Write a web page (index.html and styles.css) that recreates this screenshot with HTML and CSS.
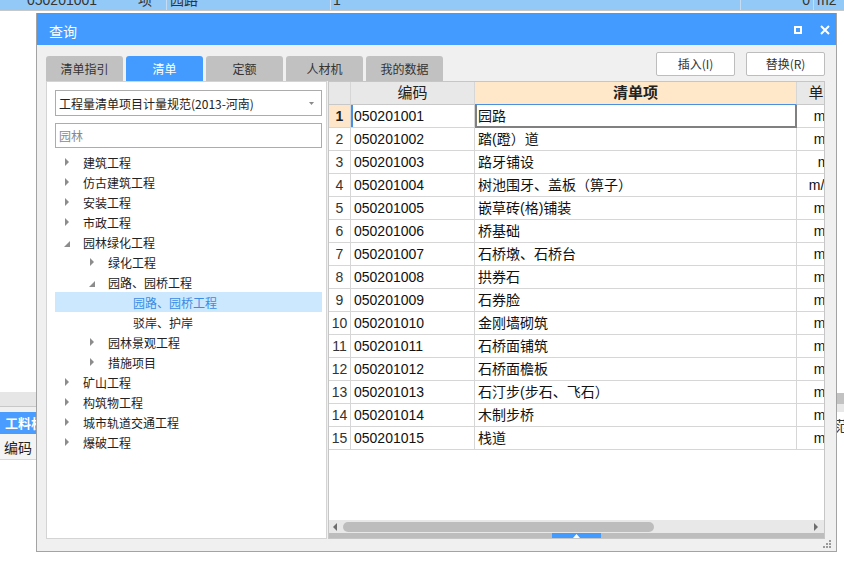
FILE: index.html
```html
<!DOCTYPE html>
<html lang="zh-CN">
<head>
<meta charset="utf-8">
<title>查询</title>
<link rel="stylesheet" href="styles.css">
</head>
<body>
<div class="bg-band">
  <div class="band-row">
    <span class="bc c1">050201001</span>
    <span class="bc c2">项</span>
    <span class="bc c3">园路</span>
    <span class="bc c4">1</span>
    <span class="bc c5">0</span>
    <span class="bc c6">m2</span>
  </div>
</div>
<div class="bg-line"></div>

<div class="bg-left">
  <div class="bl-strip"></div>
  <div class="bl-gap"></div>
  <div class="bl-tab">工料机</div>
  <div class="bl-head">编码</div>
</div>
<div class="bg-right">
  <div class="br-strip"></div>
  <div class="br-gap"></div>
  <div class="br-text">范围</div>
</div>

<div class="dialog">
  <div class="titlebar">
    <span class="title">查询</span>
    <span class="tb-icons">
      <svg class="ic-max" width="8" height="8" viewBox="0 0 8 8"><rect x="1" y="1" width="6" height="6" fill="none" stroke="#fff" stroke-width="2"/></svg>
      <svg class="ic-close" width="10" height="10" viewBox="0 0 10 10"><path d="M1 1 L9 9 M9 1 L1 9" stroke="#fff" stroke-width="2" fill="none"/></svg>
    </span>
  </div>

  <div class="toprow">
    <div class="tabs">
      <div class="tab">清单指引</div>
      <div class="tab active">清单</div>
      <div class="tab">定额</div>
      <div class="tab">人材机</div>
      <div class="tab">我的数据</div>
    </div>
    <div class="btns">
      <div class="btn">插入(I)</div>
      <div class="btn">替换(R)</div>
    </div>
  </div>

  <div class="content">
    <div class="left">
      <div class="select">
        <span>工程量清单项目计量规范(2013-河南)</span>
        <svg width="5" height="3" viewBox="0 0 5 3"><polygon points="0,0 5,0 2.5,3" fill="#8a8a8a"/></svg>
      </div>
      <div class="search">园林</div>
      <div class="tree">
        <div class="node"><span class="arr"><svg width="4" height="8" viewBox="0 0 4 8"><polygon points="0,0 4,4 0,8" fill="#8c8c8c"/></svg></span>建筑工程</div>
        <div class="node"><span class="arr"><svg width="4" height="8" viewBox="0 0 4 8"><polygon points="0,0 4,4 0,8" fill="#8c8c8c"/></svg></span>仿古建筑工程</div>
        <div class="node"><span class="arr"><svg width="4" height="8" viewBox="0 0 4 8"><polygon points="0,0 4,4 0,8" fill="#8c8c8c"/></svg></span>安装工程</div>
        <div class="node"><span class="arr"><svg width="4" height="8" viewBox="0 0 4 8"><polygon points="0,0 4,4 0,8" fill="#8c8c8c"/></svg></span>市政工程</div>
        <div class="node"><span class="arr open"><svg width="6" height="6" viewBox="0 0 6 6"><polygon points="6,0 6,6 0,6" fill="#8c8c8c"/></svg></span>园林绿化工程</div>
        <div class="node l1"><span class="arr"><svg width="4" height="8" viewBox="0 0 4 8"><polygon points="0,0 4,4 0,8" fill="#8c8c8c"/></svg></span>绿化工程</div>
        <div class="node l1"><span class="arr open"><svg width="6" height="6" viewBox="0 0 6 6"><polygon points="6,0 6,6 0,6" fill="#8c8c8c"/></svg></span>园路、园桥工程</div>
        <div class="node l2 sel"><span class="arr"></span>园路、园桥工程</div>
        <div class="node l2"><span class="arr"></span>驳岸、护岸</div>
        <div class="node l1"><span class="arr"><svg width="4" height="8" viewBox="0 0 4 8"><polygon points="0,0 4,4 0,8" fill="#8c8c8c"/></svg></span>园林景观工程</div>
        <div class="node l1"><span class="arr"><svg width="4" height="8" viewBox="0 0 4 8"><polygon points="0,0 4,4 0,8" fill="#8c8c8c"/></svg></span>措施项目</div>
        <div class="node"><span class="arr"><svg width="4" height="8" viewBox="0 0 4 8"><polygon points="0,0 4,4 0,8" fill="#8c8c8c"/></svg></span>矿山工程</div>
        <div class="node"><span class="arr"><svg width="4" height="8" viewBox="0 0 4 8"><polygon points="0,0 4,4 0,8" fill="#8c8c8c"/></svg></span>构筑物工程</div>
        <div class="node"><span class="arr"><svg width="4" height="8" viewBox="0 0 4 8"><polygon points="0,0 4,4 0,8" fill="#8c8c8c"/></svg></span>城市轨道交通工程</div>
        <div class="node"><span class="arr"><svg width="4" height="8" viewBox="0 0 4 8"><polygon points="0,0 4,4 0,8" fill="#8c8c8c"/></svg></span>爆破工程</div>
      </div>
    </div>

    <div class="grid">
      <div class="table">
        <div class="row head">
          <div class="cell num"></div>
          <div class="cell hc">编码</div>
          <div class="cell hc hname">清单项</div>
          <div class="cell hc unit">单位</div>
        </div>
        <div class="row cur"><div class="cell num">1</div><div class="cell code">050201001</div><div class="cell name focus">园路</div><div class="cell unit">m2</div></div>
        <div class="row"><div class="cell num">2</div><div class="cell code">050201002</div><div class="cell name">踏(蹬）道</div><div class="cell unit">m2</div></div>
        <div class="row"><div class="cell num">3</div><div class="cell code">050201003</div><div class="cell name">路牙铺设</div><div class="cell unit">m</div></div>
        <div class="row"><div class="cell num">4</div><div class="cell code">050201004</div><div class="cell name">树池围牙、盖板（箅子）</div><div class="cell unit">m/个</div></div>
        <div class="row"><div class="cell num">5</div><div class="cell code">050201005</div><div class="cell name">嵌草砖(格)铺装</div><div class="cell unit">m2</div></div>
        <div class="row"><div class="cell num">6</div><div class="cell code">050201006</div><div class="cell name">桥基础</div><div class="cell unit">m3</div></div>
        <div class="row"><div class="cell num">7</div><div class="cell code">050201007</div><div class="cell name">石桥墩、石桥台</div><div class="cell unit">m3</div></div>
        <div class="row"><div class="cell num">8</div><div class="cell code">050201008</div><div class="cell name">拱券石</div><div class="cell unit">m3</div></div>
        <div class="row"><div class="cell num">9</div><div class="cell code">050201009</div><div class="cell name">石券脸</div><div class="cell unit">m2</div></div>
        <div class="row"><div class="cell num">10</div><div class="cell code">050201010</div><div class="cell name">金刚墙砌筑</div><div class="cell unit">m3</div></div>
        <div class="row"><div class="cell num">11</div><div class="cell code">050201011</div><div class="cell name">石桥面铺筑</div><div class="cell unit">m2</div></div>
        <div class="row"><div class="cell num">12</div><div class="cell code">050201012</div><div class="cell name">石桥面檐板</div><div class="cell unit">m2</div></div>
        <div class="row"><div class="cell num">13</div><div class="cell code">050201013</div><div class="cell name">石汀步(步石、飞石）</div><div class="cell unit">m3</div></div>
        <div class="row"><div class="cell num">14</div><div class="cell code">050201014</div><div class="cell name">木制步桥</div><div class="cell unit">m2</div></div>
        <div class="row"><div class="cell num">15</div><div class="cell code">050201015</div><div class="cell name">栈道</div><div class="cell unit">m2</div></div>
      </div>
      <div class="hscroll">
        <svg width="4" height="8" viewBox="0 0 4 8"><polygon points="4,0 0,4 4,8" fill="#6e6e6e"/></svg>
        <div class="thumb"></div>
        <div class="spacer"></div>
        <svg width="4" height="8" viewBox="0 0 4 8"><polygon points="0,0 4,4 0,8" fill="#6e6e6e"/></svg>
      </div>
      <div class="splitter">
        <div class="split-tab"><svg width="7" height="4" viewBox="0 0 7 4"><polygon points="3.5,0 7,4 0,4" fill="#fff"/></svg></div>
      </div>
    </div>
  </div>

  <div class="footer">
    <svg width="8" height="8" viewBox="0 0 8 8" fill="#9a9a9a"><rect x="6" y="0" width="2" height="2"/><rect x="3" y="3" width="2" height="2"/><rect x="6" y="3" width="2" height="2"/><rect x="0" y="6" width="2" height="2"/><rect x="3" y="6" width="2" height="2"/><rect x="6" y="6" width="2" height="2"/></svg>
  </div>
</div>
</body>
</html>
```

FILE: styles.css
```css
* { box-sizing: border-box; }
html, body { margin: 0; padding: 0; }
body {
  width: 844px;
  height: 569px;
  position: relative;
  overflow: hidden;
  background: #fff;
  font-family: "Noto Sans CJK SC", sans-serif;
}

/* background application (behind the dialog) */
.bg-band { height: 10px; background: #93c9f7; overflow: hidden; }
.band-row {
  display: flex;
  height: 20px;
  margin-top: -10px;
  line-height: 20px;
  font-size: 14px;
  color: #333;
  font-family: "Liberation Sans", "Noto Sans CJK SC", sans-serif;
}
.bc { display: block; height: 20px; white-space: nowrap; }
.c1 { width: 130px; padding-left: 27px; }
.c2 { width: 36px; padding-left: 8px; }
.c3 { width: 164px; padding-left: 3px; border-left: 1px solid #c6dcf2; }
.c4 { width: 410px; padding-left: 2px; border-left: 1px solid #c6dcf2; }
.c5 { width: 73px; padding-right: 3px; text-align: right; border-left: 1px solid #c6dcf2; }
.c6 { width: 31px; padding-left: 3px; border-left: 1px solid #c6dcf2; }
.bg-line { height: 1px; background: #c8c8c8; }

.bg-left { position: absolute; left: 0; top: 392px; width: 60px; }
.bl-strip { height: 15px; background: #e6e6e6; border-bottom: 1px solid #c8c8c8; }
.bl-gap { height: 5px; background: #f0f0f0; }
.bl-tab { height: 22px; line-height: 22px; background: #4a9cff; color: #fff; font-size: 13px; font-weight: bold; padding-left: 5px; white-space: nowrap; }
.bl-head { height: 26px; line-height: 26px; background: #f4f4f4; color: #222; font-size: 14px; padding-left: 4px; border-bottom: 1px solid #d8d8d8; }

.bg-right { position: absolute; left: 830px; top: 393px; width: 40px; }
.br-strip { height: 11px; background: #c2c2c2; }
.br-gap { height: 8px; background: #e8e8e8; }
.br-text { padding-left: 5px; font-size: 14px; line-height: 26px; color: #333; white-space: nowrap; }

/* dialog */
.dialog {
  position: absolute;
  left: 36px;
  top: 13px;
  width: 801px;
  height: 539px;
  border: 1px solid #a3a3a3;
  border-top: 0;
  background: #f0f0f0;
  display: flex;
  flex-direction: column;
  z-index: 2;
}
.titlebar {
  height: 32px;
  background: #439bff;
  display: flex;
  align-items: center;
  justify-content: space-between;
  padding: 0 6px 0 12px;
  color: #fff;
}
.title { font-size: 14px; padding-top: 4px; }
.tb-icons { display: flex; align-items: center; gap: 18px; padding-top: 2px; }

.toprow {
  display: flex;
  justify-content: space-between;
  margin-top: 7px;
  height: 29px;
  padding: 0 11px 0 9px;
}
.tabs { display: flex; gap: 3px; align-self: flex-end; }
.tab {
  width: 77px;
  height: 25px;
  line-height: 25px;
  text-align: center;
  font-size: 12px;
  background: #c1c1c1;
  color: #333;
  border-radius: 3px 3px 0 0;
}
.tab.active { background: #439bff; color: #fff; }
.btns { display: flex; gap: 11px; align-self: flex-start; }
.btn {
  width: 79px;
  height: 24px;
  border: 1px solid #bdbdbd;
  background: #fff;
  border-radius: 2px;
  font-size: 12px;
  line-height: 22px;
  text-align: center;
  color: #333;
}

.content {
  display: flex;
  gap: 1px;
  height: 458px;
  padding: 0 11px 0 9px;
}
.left {
  width: 281px;
  background: #fff;
  border: 1px solid #d4d4d4;
  padding: 8px 4px 0 8px;
}
.select {
  height: 26px;
  border: 1px solid #acacac;
  background: #fff;
  display: flex;
  align-items: center;
  justify-content: space-between;
  padding: 0 7px 0 3px;
  font-size: 12px;
  color: #222;
}
.search {
  margin-top: 7px;
  height: 25px;
  border: 1px solid #acacac;
  background: #fff;
  font-size: 12px;
  line-height: 23px;
  color: #8a8a8a;
  padding-left: 3px;
}
.tree { margin-top: 4px; }
.node {
  height: 20px;
  display: flex;
  align-items: center;
  font-size: 12px;
  color: #222;
  white-space: nowrap;
}
.node .arr { width: 28px; height: 20px; padding-left: 10px; display: flex; align-items: center; flex: none; }
.node .arr.open { padding-left: 9px; padding-top: 3px; }
.node.l1 { padding-left: 25px; }
.node.l2 { padding-left: 50px; }
.node.sel { background: #cce8ff; color: #3b8ce3; }

.grid {
  width: 497px;
  border: 1px solid #c6c6c6;
  background: #fff;
  display: flex;
  flex-direction: column;
}
.table { flex: 1; overflow: hidden; }
.row {
  display: grid;
  grid-template-columns: 22px 124px 322px 54px;
  height: 23px;
}
.cell {
  border-right: 1px solid #d6d6d6;
  border-bottom: 1px solid #d6d6d6;
  line-height: 22px;
  font-size: 14px;
  white-space: nowrap;
  overflow: hidden;
  padding-left: 3px;
  color: #111;
  font-family: "Liberation Sans", "Noto Sans CJK SC", sans-serif;
}
.cell.num { padding-left: 0; text-align: center; color: #333; }
.cell.unit { padding-left: 0; text-align: center; }
.head .cell {
  background: #e8e8e8;
  border-bottom-color: #c8c8c8;
  font-size: 15px;
  color: #222;
  text-align: center;
  padding-left: 0;
}
.head .cell.hname { background: #ffe8c9; font-weight: bold; border-bottom-color: #4a90e2; }
.cur .cell.num { background: #fde6c9; font-weight: bold; color: #222; }
.cur .cell.code { box-shadow: inset 2px 0 #4a90e2; }
.cell.focus {
  border-right: 2px solid #808080;
  border-bottom: 2px solid #808080;
  box-shadow: inset 2px 0 #808080;
}

.hscroll {
  height: 13px;
  background: #e8e8e8;
  display: flex;
  align-items: center;
  padding: 0 6px 0 4px;
}
.thumb {
  margin-left: 6px;
  width: 311px;
  height: 10px;
  border-radius: 5px;
  background: #bdbdbd;
}
.spacer { flex: 1; }
.splitter {
  height: 5px;
  background: #bdbdbd;
  display: flex;
  justify-content: center;
}
.split-tab {
  width: 49px;
  height: 5px;
  background: #439bff;
  display: flex;
  justify-content: center;
  align-items: center;
}
.footer {
  height: 12px;
  display: flex;
  justify-content: flex-end;
  padding: 1px 5px 0 0;
}
```
